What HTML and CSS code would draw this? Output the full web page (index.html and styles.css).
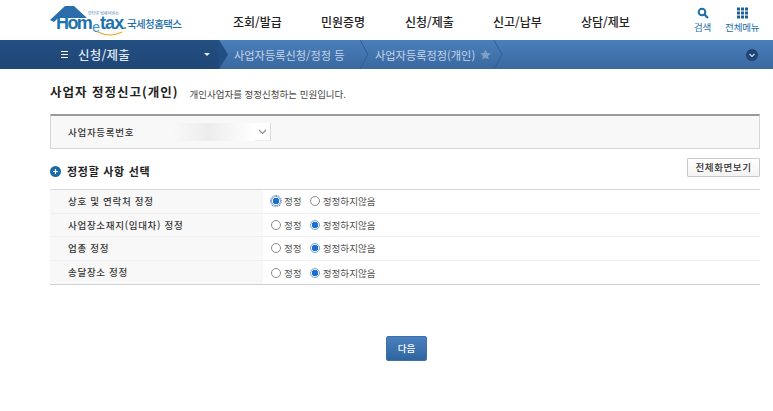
FILE: index.html
```html
<!DOCTYPE html>
<html lang="ko">
<head>
<meta charset="utf-8">
<title>사업자 정정신고(개인)</title>
<link rel="stylesheet" href="styles.css">
</head>
<body>
<header class="top">
  <a class="logo">
    <svg class="roof" width="38" height="17" viewBox="0 0 38 17"><path d="M0 15 L15 1 H24 L37 13 H8 L4 17 Z" fill="#2a6da8"/></svg>
    <span class="tagline">인터넷 납세서비스</span>
    <span class="word"><span class="home">Hom</span><span class="e">e</span><span class="tax">tax</span><span class="dot">.</span></span>
    <svg class="smile" width="26" height="6" viewBox="0 0 26 6"><path d="M1 1 Q13 7 25 1" stroke="#e8a72f" stroke-width="1.1" fill="none"/></svg>
    <span class="nts">국세청홈택스</span>
  </a>
  <nav class="menu">
    <span>조회/발급</span><span class="short">민원증명</span><span>신청/제출</span><span>신고/납부</span><span>상담/제보</span>
  </nav>
  <div class="tools">
    <span class="tool">
      <svg width="12" height="12" viewBox="0 0 12 12"><circle cx="5" cy="5" r="3.3" fill="none" stroke="#1f6ea6" stroke-width="2"/><path d="M7.5 7.5 L11 11" stroke="#1f6ea6" stroke-width="2.2"/></svg>
      <span>검색</span>
    </span>
    <span class="tool">
      <svg width="11" height="11" viewBox="0 0 11 11" fill="#1f5f94"><rect width="3" height="3"/><rect x="4" width="3" height="3"/><rect x="8" width="3" height="3"/><rect y="4" width="3" height="3"/><rect x="4" y="4" width="3" height="3"/><rect x="8" y="4" width="3" height="3"/><rect y="8" width="3" height="3"/><rect x="4" y="8" width="3" height="3"/><rect x="8" y="8" width="3" height="3"/></svg>
      <span>전체메뉴</span>
    </span>
  </div>
</header>
<div class="crumbs">
  <div class="current">
    <span class="burger"><i></i><i></i><i></i></span>
    <span class="current-name">신청/제출</span>
    <span class="caret"></span>
  </div>
  <div class="crumb first">
    <svg class="chev solid" width="11" height="29" viewBox="0 0 11 29"><path d="M0 0 L9 14.5 L0 29 Z" fill="#214f83"/></svg>
    <span>사업자등록신청/정정 등</span>
  </div>
  <div class="crumb">
    <svg class="chev" width="9" height="29" viewBox="0 0 9 29"><path d="M0 0 L8 14.5 L0 29" stroke="#2c5f98" fill="none"/></svg>
    <span>사업자등록정정(개인)</span>
    <svg class="star" width="11" height="11" viewBox="0 0 24 24"><path d="M12 1 L15.5 8.5 L23.5 9.5 L17.5 15 L19 23 L12 19 L5 23 L6.5 15 L.5 9.5 L8.5 8.5 Z" fill="#7f9fc4"/></svg>
    <svg class="chev" width="9" height="29" viewBox="0 0 9 29"><path d="M0 0 L8 14.5 L0 29" stroke="#2c5f98" fill="none"/></svg>
  </div>
  <span class="expand">
    <svg width="12" height="12" viewBox="0 0 12 12"><circle cx="6" cy="6" r="6" fill="#1d4474"/><path d="M3.5 5 L6 7.5 L8.5 5" stroke="#d5e0ec" stroke-width="1.2" fill="none"/></svg>
  </span>
</div>
<main class="content">
  <div class="title-row">
    <h1>사업자 정정신고(개인)</h1>
    <p>개인사업자를 정정신청하는 민원입니다.</p>
  </div>
  <div class="id-box">
    <span class="id-label">사업자등록번호</span>
    <span class="id-select">
      <span class="blur"></span>
      <svg width="9" height="6" viewBox="0 0 9 6"><path d="M1 1 L4.5 4.5 L8 1" stroke="#8a8a8a" stroke-width="1.1" fill="none"/></svg>
    </span>
  </div>
  <div class="section-row">
    <h2>
      <svg width="11" height="11" viewBox="0 0 11 11"><circle cx="5.5" cy="5.5" r="5.5" fill="#1a6aa8"/><path d="M3 5.5 H8 M5.5 3 V8" stroke="#fff" stroke-width="1.2"/></svg>
      정정할 사항 선택
    </h2>
    <button class="ghost" type="button">전체화면보기</button>
  </div>
  <div class="rows">
    <div class="row">
      <div class="row-label">상호 및 연락처 정정</div>
      <div class="row-value">
        <span class="opt"><span class="radio on focus"></span>정정</span>
        <span class="opt"><span class="radio"></span>정정하지않음</span>
      </div>
    </div>
    <div class="row">
      <div class="row-label">사업장소재지(임대차) 정정</div>
      <div class="row-value">
        <span class="opt"><span class="radio"></span>정정</span>
        <span class="opt"><span class="radio on"></span>정정하지않음</span>
      </div>
    </div>
    <div class="row">
      <div class="row-label">업종 정정</div>
      <div class="row-value">
        <span class="opt"><span class="radio"></span>정정</span>
        <span class="opt"><span class="radio on"></span>정정하지않음</span>
      </div>
    </div>
    <div class="row">
      <div class="row-label">송달장소 정정</div>
      <div class="row-value">
        <span class="opt"><span class="radio"></span>정정</span>
        <span class="opt"><span class="radio on"></span>정정하지않음</span>
      </div>
    </div>
  </div>
  <div class="actions"><button class="primary" type="button">다음</button></div>
</main>
</body>
</html>
```

FILE: styles.css
```css
* { box-sizing: border-box; }
html, body { margin: 0; padding: 0; }
body {
  width: 773px;
  height: 411px;
  overflow: hidden;
  background: #fff;
  font-family: "Noto Sans CJK KR", "Noto Sans", sans-serif;
  color: #333;
}

.top { height: 40px; display: flex; align-items: stretch; position: relative; }
.logo { display: block; position: relative; width: 213px; flex: none; }
.roof { position: absolute; left: 50px; top: 5px; }
.tagline { position: absolute; left: 88px; top: 10px; font-size: 4px; line-height: 6px; color: #3a7cab; white-space: nowrap; }
.word { position: absolute; left: 56px; top: 16px; font: bold 18px/14px "Liberation Sans", sans-serif; color: #1e73ad; white-space: nowrap; }
.word .home { letter-spacing: -1.6px; }
.word .tax { letter-spacing: -0.9px; }
.word .e { font-size: 14px; position: relative; top: 3px; margin-left: 1px; color: #3b8ec4; font-weight: normal; }
.word .dot { color: #5aa02c; font-size: 12px; }
.smile { position: absolute; left: 97px; top: 31px; }
.nts { position: absolute; left: 127px; top: 16px; font-size: 10.5px; line-height: 16px; font-weight: 500; color: #1c6ea8; letter-spacing: -0.6px; white-space: nowrap; }

.menu { display: flex; width: 444px; flex: none; padding-left: 20px; padding-top: 13px; gap: 40px; font-size: 12px; line-height: 18px; font-weight: 500; color: #222; }
.menu span { width: 48px; white-space: nowrap; }
.menu .short { width: 44px; }
.tools { display: flex; gap: 14px; padding-top: 7px; margin-left: 37px; }
.tool { display: flex; flex-direction: column; align-items: center; gap: 1px; font-size: 9.5px; line-height: 14px; color: #1f6ea6; letter-spacing: -0.2px; }
.tool svg { display: block; height: 12px; }

.crumbs { height: 29px; display: flex; align-items: center; background: linear-gradient(#4a7fbb, #3a689f); color: #c5d5e8; font-size: 11.2px; position: relative; }
.current { width: 219px; height: 100%; flex: none; display: flex; align-items: center; padding-left: 61px; background: linear-gradient(#234f82, #1f4675); color: #dfe7f1; }
.burger { display: flex; flex-direction: column; gap: 2px; width: 7px; margin-right: 10px; }
.burger i { display: block; height: 1px; background: #fff; }
.current-name { font-size: 12.5px; font-weight: 500; letter-spacing: 0.2px; }
.caret { margin-left: auto; margin-right: 9px; border: 3px solid transparent; border-top: 3px solid #e6edf5; border-bottom: 0; }
.crumb { height: 100%; display: flex; align-items: center; flex: none; white-space: nowrap; }
.crumb.first { gap: 4px; width: 141px; }
.crumb.first span { width: 124px; }
.crumb .chev { flex: none; display: block; }
.crumb:not(.first) span { margin-left: 6px; }
.star { margin: 0 3px 0 5px; }
.expand { margin-left: auto; margin-right: 15px; display: flex; }

.content { padding: 0 13px 0 50px; }
.title-row { display: flex; align-items: center; height: 45px; padding-top: 1px; }
h1 { margin: 0; font-size: 12.5px; line-height: 18px; font-weight: 700; color: #222; letter-spacing: 1px; }
.title-row p { margin: 3px 0 0 11px; font-size: 9.5px; line-height: 12px; color: #444; }

.id-box { height: 35px; display: flex; align-items: center; border: 1px solid #d6d6d6; border-top: 2px solid #9a9a9a; background: #f8f8f8; padding-left: 17px; }
.id-label { width: 103px; font-size: 9.5px; font-weight: 500; color: #333; letter-spacing: 0.7px; }
.id-select { width: 100px; height: 18px; display: flex; align-items: center; justify-content: flex-end; padding-right: 3px; background: #fff; border-right: 1px solid #ddd; border-bottom: 1px solid #eee; }
.id-select .blur { flex: 1; height: 18px; background: linear-gradient(90deg, #f8f8f8, #ededed 45%, #fafafa 85%, #fff); margin-right: 3px; }

.section-row { display: flex; align-items: flex-start; justify-content: space-between; height: 40px; padding-top: 9px; }
h2 { margin: 6px 0 0; display: flex; align-items: center; gap: 6px; font-size: 11px; line-height: 14px; font-weight: 700; color: #222; letter-spacing: 0.7px; }
.ghost { width: 73px; height: 19px; padding: 0; font: 500 9.5px/17px "Noto Sans CJK KR", sans-serif; color: #333; background: linear-gradient(#fff, #f3f3f3); border: 1px solid #c9c9c9; border-radius: 1px; letter-spacing: 0.6px; }

.rows { border-top: 1px solid #d8d8d8; border-bottom: 1px solid #d0d0d0; }
.row { height: 23.6px; display: flex; border-bottom: 1px solid #efefef; }
.row:last-child { border-bottom: 0; }
.row-label { width: 213px; flex: none; background: #f8f8f8; padding-left: 18px; font-size: 9.5px; line-height: 22px; font-weight: 500; color: #333; letter-spacing: 0.7px; }
.row-value { display: flex; align-items: center; padding-left: 8px; gap: 8px; font-size: 9.6px; color: #555; }
.opt { display: flex; align-items: center; gap: 3px; }
.radio { width: 10px; height: 10px; border-radius: 50%; border: 1px solid #8a8a8a; background: #fff; flex: none; }
.radio.on { border-color: #6f9fd0; background: radial-gradient(circle, #1a6fd0 0 3px, #fff 3.5px); }
.radio.focus { outline: 1px dotted #3c6fb0; outline-offset: 0; }

.actions { display: flex; justify-content: center; padding: 51px 0 0 0; margin-left: -50px; margin-right: -13px; }
.primary { width: 41px; height: 25px; padding: 0; margin-left: 40px; font: 500 9.5px/23px "Noto Sans CJK KR", sans-serif; color: #fff; background: linear-gradient(#4a80bd, #2f659f); border: 1px solid #3d72ad; border-radius: 2px; }
```
